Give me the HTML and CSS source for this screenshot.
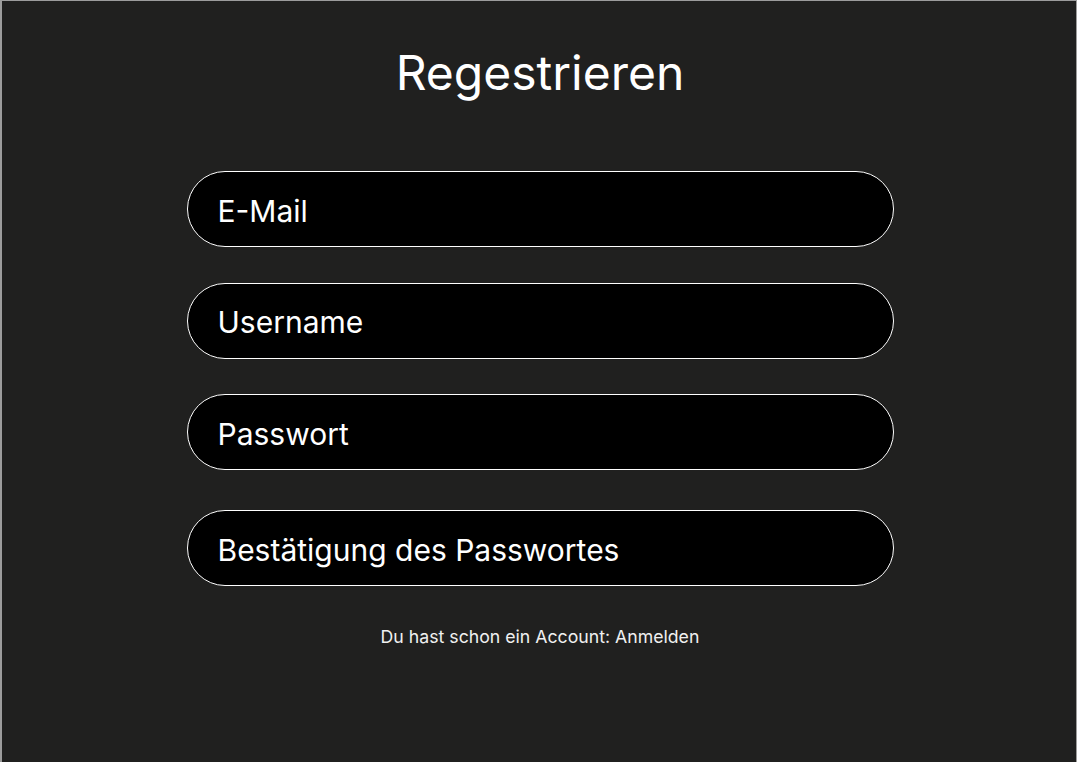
FILE: index.html
```html
<!DOCTYPE html>
<html lang="de">
<head>
<meta charset="utf-8">
<title>Regestrieren</title>
<link rel="stylesheet" href="styles.css">
</head>
<body>
<main class="page">
  <h1 class="title">Regestrieren</h1>
  <form class="form">
    <input class="field" type="email" placeholder="E-Mail">
    <input class="field" type="text" placeholder="Username">
    <input class="field" type="password" placeholder="Passwort">
    <input class="field field-confirm" type="password" placeholder="Bestätigung des Passwortes">
  </form>
  <p class="footer">Du hast schon ein Account: <a class="link" href="#">Anmelden</a></p>
</main>
</body>
</html>
```

FILE: styles.css
```css
html, body {
  margin: 0;
  padding: 0;
  background: #9c9c9c;
}

.page {
  margin: 1px 1px 0 2px;
  height: 761px;
  box-sizing: border-box;
  background: #20201f;
  padding: 43px 0 0 2px;
  display: flex;
  flex-direction: column;
  align-items: center;
  font-family: "Inter", "Noto Sans", sans-serif;
  color: #ffffff;
}

.title {
  margin: 0;
  font-size: 48px;
  font-weight: 400;
  line-height: 58px;
  color: #ffffff;
}

.form {
  margin-top: 69px;
  display: flex;
  flex-direction: column;
  gap: 35.6px;
  width: 707px;
}

.field {
  display: block;
  width: 100%;
  height: 76px;
  box-sizing: border-box;
  margin: 0;
  padding: 3px 30px 0 30px;
  background: #000000;
  border: 1.5px solid #ffffff;
  border-radius: 38px;
  font-family: "Inter", "Noto Sans", sans-serif;
  font-size: 30px;
  color: #ffffff;
  outline: none;
}

.field::placeholder {
  color: #ffffff;
  opacity: 1;
}

.field-confirm {
  margin-top: 4.4px;
}

.footer {
  margin: 40px 0 0;
  font-size: 17.7px;
  line-height: 22px;
  color: #f0f0f0;
}

.link {
  color: inherit;
  text-decoration: none;
}
```
